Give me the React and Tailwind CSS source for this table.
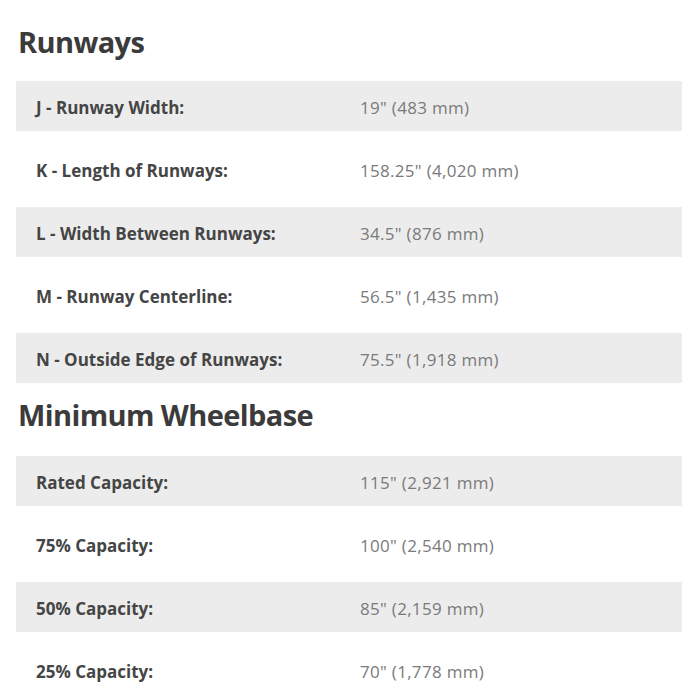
import React from "react";

const runways = [
    ["J - Runway Width:", "19\" (483 mm)"],
    ["K - Length of Runways:", "158.25\" (4,020 mm)"],
    ["L - Width Between Runways:", "34.5\" (876 mm)"],
    ["M - Runway Centerline:", "56.5\" (1,435 mm)"],
    ["N - Outside Edge of Runways:", "75.5\" (1,918 mm)"],
];

const wheelbase = [
    ["Rated Capacity:", "115\" (2,921 mm)"],
    ["75% Capacity:", "100\" (2,540 mm)"],
    ["50% Capacity:", "85\" (2,159 mm)"],
    ["25% Capacity:", "70\" (1,778 mm)"],
];

const SpecRows = ({ rows }) => (
    <div className="flex flex-col gap-[13px]">
        {rows.map(([label, value], index) => (
            <div
                key={index}
                className={`flex items-center h-[50px] pl-5 pt-[3px] ${index % 2 === 0 ? "bg-[#ececec]" : ""}`}
            >
                <span className="w-[324px] text-[17px] font-bold text-[#454545]">{label}</span>
                <span className="text-[17px] text-[#7a7a7a] tracking-[0.3px]">{value}</span>
            </div>
        ))}
    </div>
);

const App = () => {
    return (
        <div className="w-[700px] h-[700px] overflow-hidden bg-white pl-4 pr-[18px] pt-[22px]" style={{ fontFamily: '"Open Sans", sans-serif' }}>
            <h2 className="h-10 flex items-center pl-0.5 text-[29px] font-bold tracking-[-0.6px] text-[#3b3b3b] mb-[19px]">Runways</h2>
            <SpecRows rows={runways} />
            <h2 className="h-10 flex items-center pl-0.5 mt-3 mb-[21px] text-[29px] font-bold tracking-[-0.6px] text-[#3b3b3b]">Minimum Wheelbase</h2>
            <SpecRows rows={wheelbase} />
        </div>
    );
};

export default App;
